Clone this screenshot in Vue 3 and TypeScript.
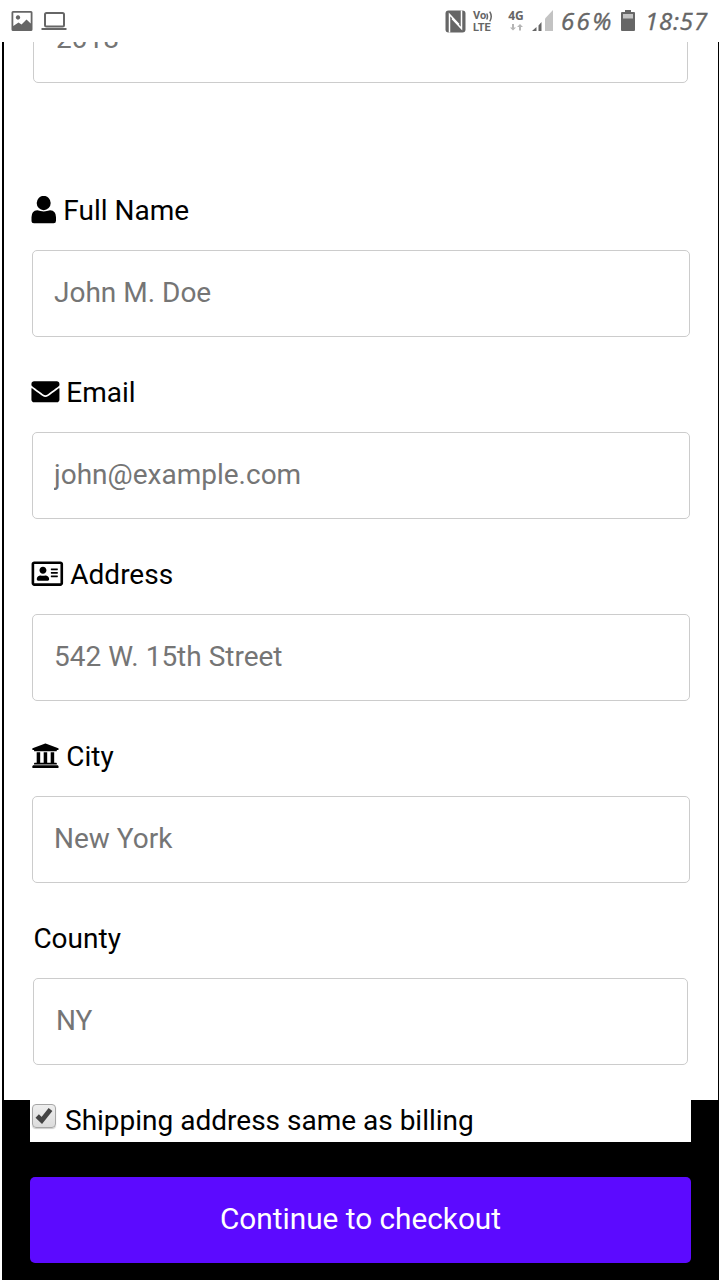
<script setup lang="ts">
import { ref } from 'vue'

type IconName = 'user' | 'envelope' | 'card' | 'bank'

interface Field {
  id: string
  label: string
  placeholder: string
  icon?: IconName
}

const fields: Field[] = [
  { id: 'name', label: 'Full Name', placeholder: 'John M. Doe', icon: 'user' },
  { id: 'email', label: 'Email', placeholder: 'john@example.com', icon: 'envelope' },
  { id: 'address', label: 'Address', placeholder: '542 W. 15th Street', icon: 'card' },
  { id: 'city', label: 'City', placeholder: 'New York', icon: 'bank' },
  { id: 'county', label: 'County', placeholder: 'NY' },
]

const values = ref<Record<string, string>>({ year: '', name: '', email: '', address: '', city: '', county: '' })
const sameAddress = ref(true)
</script>

<template>
  <div class="screen">
    <header class="status">
      <svg class="photo" width="22" height="20" viewBox="0 0 22 20">
        <path fill="#666" fill-rule="evenodd" d="M2 0H20Q21.500 0 21.500 1.500V18.500Q21.500 20 20 20H2Q.5 20 .5 18.500V1.500Q.5 0 2 0ZM2.300 1.800V15L7.500 11.500L10.500 13.500L15.500 8.500L19.700 12.500V1.800ZM7 4.300A2.200 2.200 0 1 1 6.990 4.300Z" />
      </svg>
      <svg class="laptop" width="26" height="20" viewBox="0 0 26 20">
        <rect x="4" y="2" width="19" height="13.500" rx="1.500" fill="none" stroke="#666" stroke-width="2" />
        <path fill="#666" d="M.5 17H25.500V19H.5Z" />
      </svg>
      <span class="spacer"></span>
      <svg class="nfc" width="21" height="23" viewBox="0 0 21 23">
        <rect x=".5" y=".5" width="20" height="22" rx="3" fill="#666" />
        <path d="M4.500 22.500V4.500L14 14.500M16.500 .5V18.500L7 8.500" fill="none" stroke="#fff" stroke-width="1.500" />
      </svg>
      <div class="volte">
        <div class="vo">
          <span>Vo</span>
          <svg width="7" height="11" viewBox="0 0 7 11">
            <path d="M.7 2.500Q2.300 5.500 .7 8.500M3.700 .7Q6.800 5.500 3.700 10.300" fill="none" stroke="#666" stroke-width="1.500" />
          </svg>
        </div>
        <div>LTE</div>
      </div>
      <div class="net">
        <span>4G</span>
        <svg width="13" height="7" viewBox="0 0 13 7">
          <path fill="#b5b5b5" d="M2 0H4V3.500H6L3 6.500L0 3.500H2ZM9 6.500H11V3H13L10 0L7 3H9Z" />
        </svg>
      </div>
      <svg class="signal" width="21" height="21" viewBox="0 0 21 21">
        <path fill="#666" d="M0 21L4.500 17V21ZM6.500 15.500L9.500 12V21H6.500Z" />
        <path fill="#c3c3c3" d="M13 8.500L21 0V21H13Z" />
      </svg>
      <span class="percent">66%</span>
      <svg class="battery" width="14" height="21" viewBox="0 0 14 21">
        <path fill="#666" d="M4 0H10V2H13Q14 2 14 3V20Q14 21 13 21H1Q0 21 0 20V3Q0 2 1 2H4Z" />
        <rect x="2" y="4" width="10" height="4.500" fill="#c3c3c3" />
      </svg>
      <span class="clock">18:57</span>
    </header>

    <main class="page">
      <section class="panel">
        <input v-model="values.year" class="box narrow year" type="text" placeholder="2018" />
        <div v-for="f in fields" :key="f.id" class="field" :class="{ narrow: !f.icon }">
          <label class="label" :for="f.id">
            <svg v-if="f.icon === 'user'" width="25" height="28" viewBox="0 0 25 28">
              <ellipse cx="12.700" cy="7" rx="7" ry="7.200" />
              <path d="M6.300 14.300Q12.700 16.500 19.100 14.300Q25 14.600 25 21.300V24.800Q25 27.300 22.600 27.300H3Q.5 27.300 .5 24.800V21.300Q.5 14.600 6.300 14.300Z" />
            </svg>
            <svg v-else-if="f.icon === 'envelope'" width="28" height="28" viewBox="-8 4 512 512" overflow="visible">
              <path d="M502.300 190.800c3.900-3.100 9.700-.2 9.700 4.700V400c0 26.500-21.500 48-48 48H48c-26.500 0-48-21.500-48-48V195.600c0-5 5.700-7.800 9.700-4.700 22.400 17.400 52.100 39.500 154.100 113.600 21.100 15.400 56.700 47.800 92.200 47.600 35.700.3 72-32.800 92.300-47.600 102-74.100 131.600-96.300 154-113.700zM256 320c23.200.4 56.600-29.200 73.400-41.400 132.700-96.300 142.800-104.700 173.400-128.700 5.800-4.500 9.200-11.500 9.200-18.900v-19c0-26.500-21.500-48-48-48H48c-26.500 0-48 21.500-48 48v19c0 7.400 3.400 14.300 9.200 18.900 30.600 23.900 40.700 32.400 173.400 128.700 16.800 12.200 50.200 41.800 73.400 41.400z" />
            </svg>
            <svg v-else-if="f.icon === 'card'" width="32" height="28" viewBox="-6 6 576 512" overflow="visible">
              <path d="M528 32H48C21.500 32 0 53.500 0 80v352c0 26.500 21.500 48 48 48h480c26.500 0 48-21.500 48-48V80c0-26.500-21.500-48-48-48zm0 400H48V80h480v352zM208 256c35.300 0 64-28.700 64-64s-28.700-64-64-64-64 28.700-64 64 28.700 64 64 64zm-89.600 128h179.200c12.400 0 22.400-8.600 22.400-19.200v-19.200c0-31.800-30.100-57.600-67.200-57.600-10.800 0-18.700 8-44.800 8-26.900 0-33.400-8-44.800-8-37.100 0-67.200 25.800-67.200 57.600v19.200c0 10.600 10 19.200 22.400 19.200zM360 320h112c4.400 0 8-3.600 8-8v-16c0-4.400-3.600-8-8-8H360c-4.400 0-8 3.600-8 8v16c0 4.400 3.600 8 8 8zm0-64h112c4.400 0 8-3.600 8-8v-16c0-4.400-3.600-8-8-8H360c-4.400 0-8 3.600-8 8v16c0 4.400 3.600 8 8 8zm0-64h112c4.400 0 8-3.600 8-8v-16c0-4.400-3.600-8-8-8H360c-4.400 0-8 3.600-8 8v16c0 4.400 3.600 8 8 8z" />
            </svg>
            <svg v-else-if="f.icon === 'bank'" width="28" height="28" viewBox="-8 6 512 512" overflow="visible">
              <path d="M496 128v16a8 8 0 0 1-8 8h-24v12c0 6.627-5.373 12-12 12H60c-6.627 0-12-5.373-12-12v-12H24a8 8 0 0 1-8-8v-16a8 8 0 0 1 4.941-7.392l232-88a7.996 7.996 0 0 1 6.118 0l232 88A8 8 0 0 1 496 128zm-24 304H40c-13.255 0-24 10.745-24 24v16a8 8 0 0 0 8 8h464a8 8 0 0 0 8-8v-16c0-13.255-10.745-24-24-24zM96 192v192H60c-6.627 0-12 5.373-12 12v20h416v-20c0-6.627-5.373-12-12-12h-36V192h-64v192h-64V192h-64v192h-64V192H96z" />
            </svg>
            <span>{{ f.label }}</span>
          </label>
          <input :id="f.id" v-model="values[f.id]" class="box" type="text" :placeholder="f.placeholder" />
        </div>
      </section>

      <label class="shipping">
        <input v-model="sameAddress" class="native" type="checkbox" />
        <span class="check">
          <svg v-if="sameAddress" width="20" height="20" viewBox="0 0 20 20">
            <path d="M3.200 10L7.800 14.500L16.500 3.500" fill="none" stroke="#444" stroke-width="4.800" />
          </svg>
        </span>
        <span>Shipping address same as billing</span>
      </label>
      <button class="submit" type="button">Continue to checkout</button>
    </main>
  </div>
</template>

<style>
html,
body {
  margin: 0;
  background: #fff;
}
</style>

<style scoped>
.screen {
  width: 720px;
  height: 1280px;
  display: flex;
  flex-direction: column;
  overflow: hidden;
  background: #fff;
  color: #000;
  font-family: Roboto, sans-serif;
  font-size: 28px;
}
.status {
  box-sizing: border-box;
  height: 42px;
  flex: none;
  display: flex;
  align-items: flex-start;
  padding: 0 13px 0 11px;
  color: #666;
}
.status svg {
  display: block;
  flex: none;
}
.photo {
  margin-top: 11px;
}
.laptop {
  margin: 11px 0 0 8px;
}
.spacer {
  flex: 1;
}
.nfc {
  margin-top: 10px;
}
.volte {
  width: 22px;
  margin: 10px 0 0 7px;
  font: 700 11px/12px Roboto, sans-serif;
}
.vo {
  display: flex;
  align-items: center;
}
.net {
  width: 18px;
  margin: 10px 0 0 12px;
  display: flex;
  flex-direction: column;
  align-items: center;
  gap: 2px;
  font: 700 12px/12px "Open Sans", sans-serif;
}
.signal {
  margin: 10px 0 0 7px;
}
.percent,
.clock {
  font: italic 400 24px/42px "Open Sans", sans-serif;
  -webkit-text-stroke: 0.4px #666;
  white-space: nowrap;
}
.percent {
  width: 53px;
  margin-left: 8px;
  letter-spacing: 2.400px;
}
.battery {
  margin: 10px 0 0 7px;
}
.clock {
  width: 62px;
  margin-left: 10px;
  letter-spacing: 0.800px;
}
.page {
  width: 717px;
  height: 1238px;
  margin-left: 2px;
  background: #000;
}
.panel {
  box-sizing: border-box;
  height: 1058px;
  margin: 0 1px 0 2px;
  padding: 0 28px;
  overflow: hidden;
  background: #fff;
}
.box {
  display: block;
  box-sizing: border-box;
  width: 100%;
  height: 87px;
  margin: 0;
  padding: 0 21px 3px;
  border: 1px solid #ccc;
  border-radius: 5px;
  outline: none;
  background: #fff;
  color: #000;
  font: 28px Roboto, sans-serif;
}
.box::placeholder {
  color: #757575;
  opacity: 1;
}
.narrow {
  margin-left: 1px;
  margin-right: 2px;
}
.narrow .box {
  padding-left: 22px;
}
.year {
  width: 655px;
  margin: -46px 0 107px 1px;
  padding-left: 22px;
}
.field {
  margin-bottom: 35px;
}
.label {
  display: flex;
  align-items: center;
  gap: 7.300px;
  height: 40px;
  margin: 0 0 20px -1px;
}
.narrow .label {
  margin-left: 0.400px;
}
.label svg {
  flex: none;
  margin-top: -1px;
}
.shipping {
  box-sizing: border-box;
  display: flex;
  align-items: flex-start;
  width: 661px;
  height: 42px;
  margin-left: 28px;
  padding: 3px 0 0 2px;
  background: #fff;
  line-height: 35px;
}
.native {
  position: absolute;
  opacity: 0;
  pointer-events: none;
}
.check {
  box-sizing: border-box;
  width: 24px;
  height: 24px;
  margin: 1px 9px 0 0;
  display: flex;
  align-items: center;
  justify-content: center;
  border: 1px solid #a6a6a6;
  border-radius: 4px;
  background: linear-gradient(#eee, #dcdcdc);
  box-shadow: 0 1px 1px #ccc;
}
.submit {
  display: block;
  width: 661px;
  height: 86px;
  margin: 35px 0 0 28px;
  padding: 0 0 4px;
  border: 0;
  border-radius: 5px;
  background: #5c0aff;
  color: #fff;
  font: 29.750px Roboto, sans-serif;
}
</style>
